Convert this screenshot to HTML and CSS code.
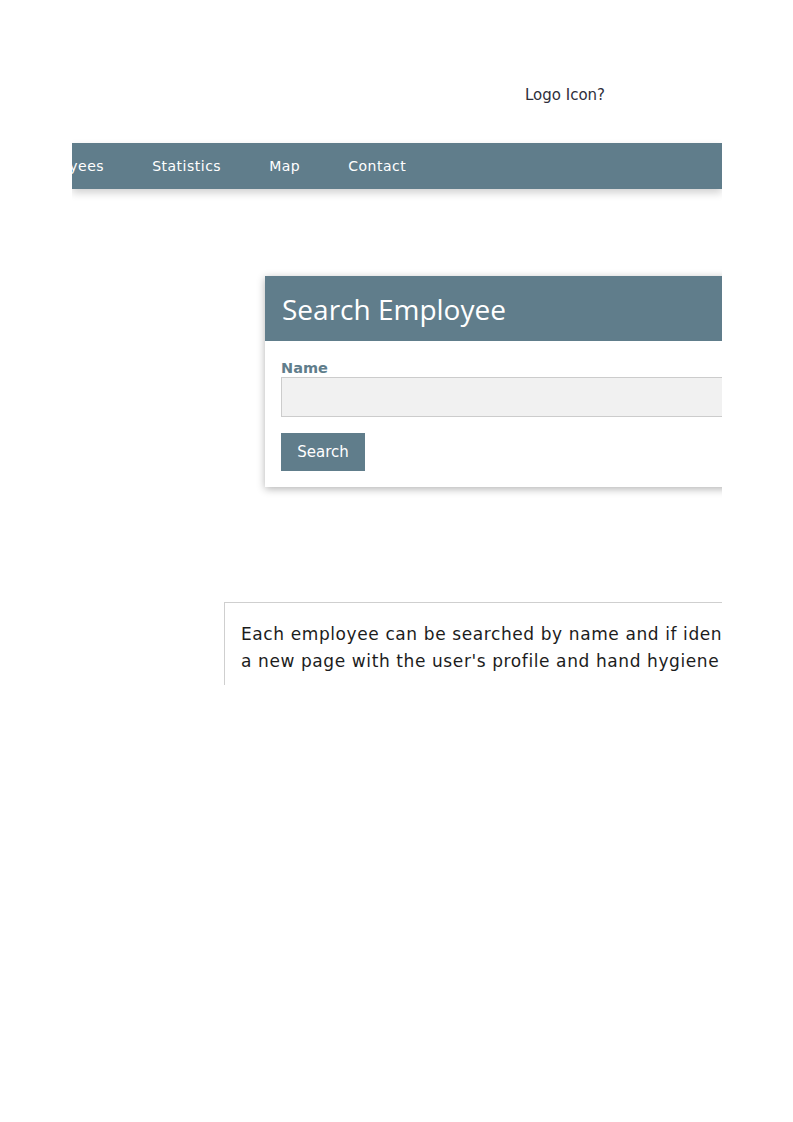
FILE: index.html
```html
<!DOCTYPE html>
<html lang="en">
<head>
<meta charset="utf-8">
<title>Search Employee</title>
<link rel="stylesheet" href="styles.css">
</head>
<body>
<div class="frame">
  <header class="top">
    <span class="logo">Logo Icon?</span>
  </header>
  <nav class="nav">
    <ul class="nav-list">
      <li class="nav-item">Employees</li>
      <li class="nav-item">Statistics</li>
      <li class="nav-item">Map</li>
      <li class="nav-item">Contact</li>
    </ul>
  </nav>
  <main class="main">
    <section class="card">
      <div class="card-head">
        <h1 class="card-title">Search Employee</h1>
      </div>
      <form class="card-body">
        <label class="field-label" for="name">Name</label>
        <input class="field-input" id="name" type="text">
        <button class="btn" type="button">Search</button>
      </form>
    </section>
    <section class="note">
      <p class="note-text">Each employee can be searched by name and if identified, the user is taken to<br>a new page with the user's profile and hand hygiene statistics.</p>
    </section>
  </main>
</div>
</body>
</html>
```
FILE: styles.css
```css
html, body {
  margin: 0;
  padding: 0;
  background: #ffffff;
}

.frame {
  margin-left: 72px;
  width: 650px;
  height: 685px;
  overflow: hidden;
  font-family: "DejaVu Sans", Verdana, sans-serif;
}

.top {
  height: 143px;
  display: flex;
  align-items: flex-start;
  box-sizing: border-box;
  padding-top: 86px;
  padding-left: 453px;
}

.logo {
  font-size: 15px;
  line-height: 18px;
  color: #2e2e3a;
}

.nav {
  height: 46px;
  background: #607d8b;
  box-shadow: 0 4px 8px rgba(0, 0, 0, 0.18);
  display: flex;
  align-items: center;
}

.nav-list {
  list-style: none;
  margin: 0 0 0 -73px;
  padding: 0;
  display: flex;
}

.nav-item {
  padding: 0 24px;
  color: #ffffff;
  font-size: 14px;
  letter-spacing: 0.5px;
  line-height: 20px;
  white-space: nowrap;
}

.main {
  display: flex;
  flex-direction: column;
  padding-top: 87px;
}

.card {
  margin-left: 193px;
  width: 640px;
  background: #ffffff;
  box-shadow: 0 2px 8px rgba(0, 0, 0, 0.3);
}

.card-head {
  height: 65px;
  background: #607d8b;
  display: flex;
  align-items: center;
  padding: 0 17px;
}

.card-title {
  margin: 0;
  font-family: "Open Sans", "Noto Sans", sans-serif;
  font-weight: 400;
  font-size: 28px;
  color: #ffffff;
  white-space: nowrap;
}

.card-body {
  display: flex;
  flex-direction: column;
  align-items: flex-start;
  padding: 18px 16px 16px 16px;
  margin: 0;
}

.field-label {
  font-size: 14.5px;
  font-weight: 700;
  line-height: 18px;
  color: #607d8b;
}

.field-input {
  box-sizing: border-box;
  width: 100%;
  height: 40px;
  margin: 0;
  background: #f1f1f1;
  border: 1px solid #cccccc;
  border-radius: 0;
  outline: none;
}

.btn {
  margin-top: 16px;
  height: 38px;
  width: 84px;
  background: #607d8b;
  color: #ffffff;
  border: none;
  border-radius: 0;
  font-family: "DejaVu Sans", Verdana, sans-serif;
  font-size: 15px;
  padding: 0;
}

.note {
  margin-top: 115px;
  margin-left: 152px;
  width: 900px;
  border-top: 1px solid #cfcfcf;
  border-left: 1px solid #cfcfcf;
  padding: 18px 16px 16px 16px;
}

.note-text {
  margin: 0;
  font-size: 17px;
  letter-spacing: 0.6px;
  line-height: 27px;
  color: #1c1c1c;
  white-space: nowrap;
}
```
